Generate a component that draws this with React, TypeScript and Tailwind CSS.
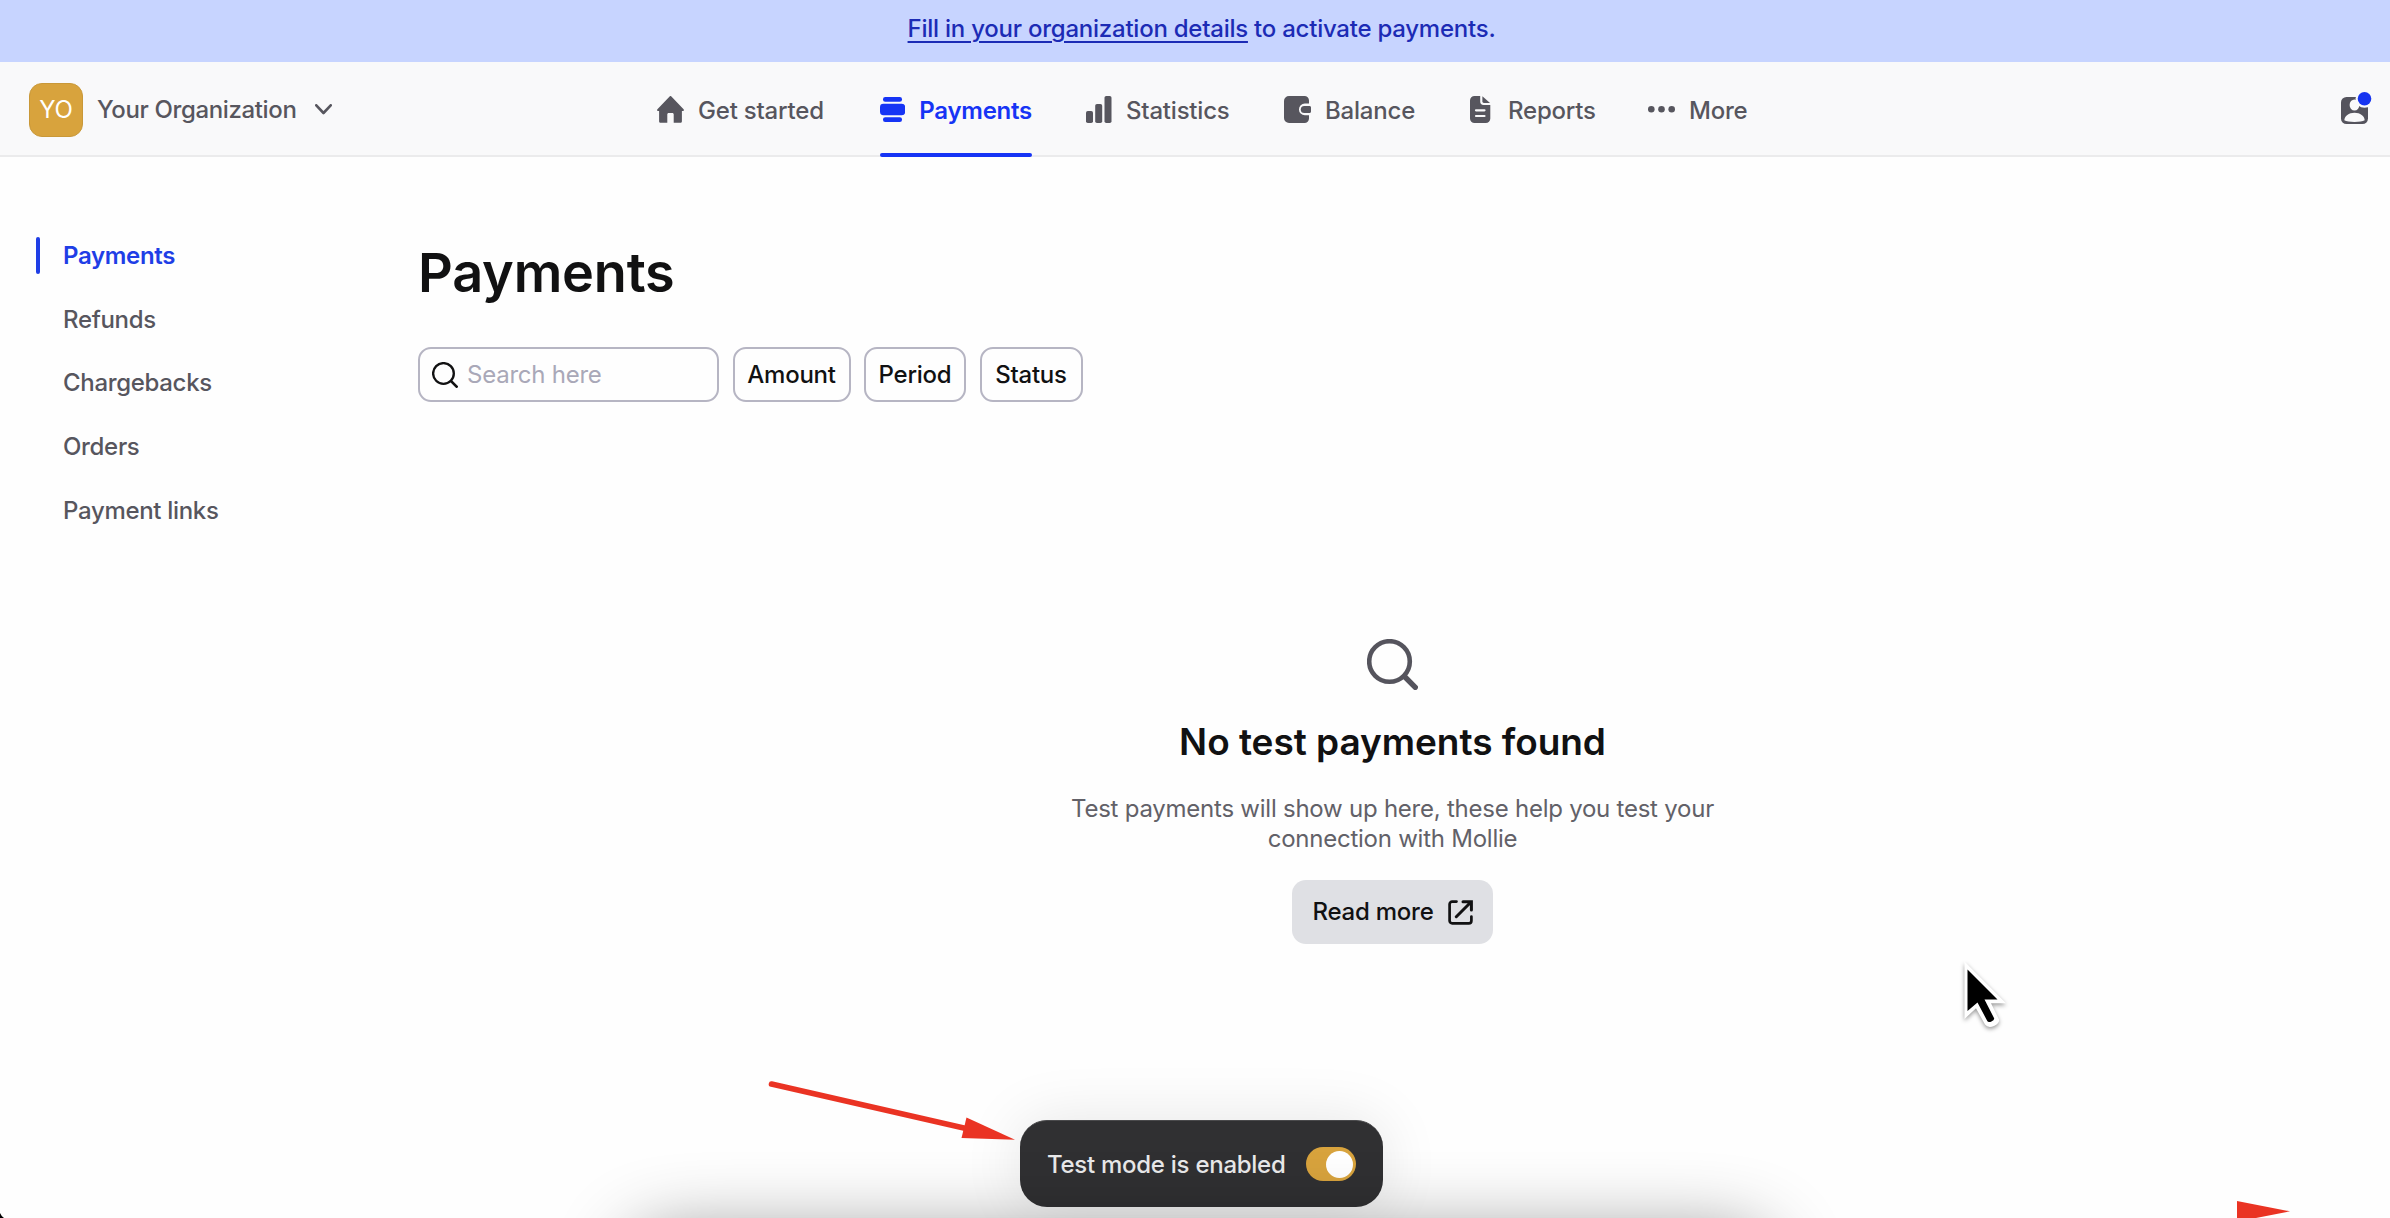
import React from "react";

type IconProps = { className?: string };

const HomeIcon = () => (
  <svg width="27" height="27" viewBox="0 0 27 27" fill="currentColor">
    <path d="M12.6.4a1.3 1.3 0 0 1 1.8 0L26.6 13.2c.7.8.2 1.8-.8 1.8h-.9v10.2c0 .9-.7 1.6-1.6 1.6h-6.6v-8.3c0-.8-.6-1.4-1.4-1.4h-3.6c-.8 0-1.4.6-1.4 1.4v8.3H3.7c-.9 0-1.6-.7-1.6-1.6V15h-.9c-1 0-1.500-1-.8-1.800z" />
  </svg>
);

const PaymentsIcon = () => (
  <svg width="27" height="27" viewBox="0 0 27 27" fill="currentColor">
    <rect x="3.200" y="0" width="20.400" height="5.200" rx="2.400" />
    <rect x="0" y="7.400" width="27" height="12.200" rx="3.600" />
    <rect x="3.200" y="21.800" width="20.400" height="5.200" rx="2.400" />
  </svg>
);

const StatisticsIcon = () => (
  <svg width="27" height="27" viewBox="0 0 27 27" fill="currentColor">
    <rect x="1" y="15" width="7" height="12" rx="1.800" />
    <rect x="10.200" y="8" width="7" height="19" rx="1.800" />
    <rect x="19.500" y="0" width="7" height="27" rx="1.800" />
  </svg>
);

const BalanceIcon = () => (
  <svg width="27" height="27" viewBox="0 0 27 27" fill="currentColor">
    <path d="M5 0h15.500A4.500 4.500 0 0 1 25 4.500V7.600h-4.200a5.850 5.850 0 0 0 0 11.700H25v3.200a4.500 4.500 0 0 1-4.500 4.500H5a5 5 0 0 1-5-5V5a5 5 0 0 1 5-5Z" />
    <path d="M20.300 9.900H25.500c.9 0 1.500.6 1.500 1.500v4.100c0 .9-.6 1.500-1.500 1.500h-5.200a3.550 3.550 0 0 1 0-7.100Z" />
  </svg>
);

const ReportsIcon = () => (
  <svg width="27" height="27" viewBox="0 0 27 27" fill="currentColor">
    <path
      fillRule="evenodd"
      d="M7.500 0H13.200V5.600A3.400 3.400 0 0 0 16.600 9H23.300V22.500a4.500 4.500 0 0 1-4.500 4.500H7.500A4.500 4.500 0 0 1 3 22.500v-18A4.500 4.500 0 0 1 7.500 0ZM9 13.200a1 1 0 0 0 0 2.200h8.500a1 1 0 0 0 0-2.200ZM9 18.900a1 1 0 0 0 0 2.200h8.500a1 1 0 0 0 0-2.200Z"
    />
    <path d="M15.400.3 23 7H16.800a1.400 1.400 0 0 1-1.400-1.400Z" />
  </svg>
);

const MoreIcon = () => (
  <svg width="27" height="27" viewBox="0 0 27 27" fill="currentColor">
    <circle cx="3.300" cy="13.300" r="3.300" />
    <circle cx="13.500" cy="13.300" r="3.300" />
    <circle cx="23.700" cy="13.300" r="3.300" />
  </svg>
);

const SearchIcon = ({ className }: IconProps) => (
  <svg className={className} viewBox="0 0 51 51" fill="none" stroke="currentColor" strokeLinecap="round">
    <circle cx="22.500" cy="22.500" r="20.300" strokeWidth="4.600" />
    <path d="M37.500 37.500 48.300 48.300" strokeWidth="5.400" />
  </svg>
);

const ProfileIcon = () => (
  <svg width="31" height="33" viewBox="0 0 31 33">
    <rect x="0" y="5" width="27" height="27" rx="5.500" fill="#55545d" />
    <ellipse cx="13.500" cy="13" rx="4.900" ry="5.600" fill="#f9f9fa" />
    <path d="M3.300 28.200c.3-4.300 4.400-7.500 10.200-7.500s9.900 3.200 10.200 7.500c-2 1.300-5.600 1.700-10.200 1.700S5.300 29.500 3.300 28.200Z" fill="#f9f9fa" />
    <circle cx="23.500" cy="6.800" r="9" fill="#f9f9fa" />
    <circle cx="23.500" cy="6.800" r="6.800" fill="#1634f0" />
  </svg>
);

const ExternalIcon = () => (
  <svg width="25" height="25" viewBox="0 0 25 25" fill="none" stroke="currentColor" strokeWidth="2.700" strokeLinecap="round">
    <path d="M8.500 1.600H4.200A2.600 2.600 0 0 0 1.600 4.200v16.600a2.600 2.600 0 0 0 2.600 2.600h16.600a2.600 2.600 0 0 0 2.600-2.600V16.500" />
    <path d="M15 1.700h8.400V10M23 2 8.300 16.700" strokeWidth="3" />
  </svg>
);

const navItems = [
  { label: "Get started", icon: <HomeIcon />, width: "w-[223px]" },
  { label: "Payments", icon: <PaymentsIcon />, width: "w-[205px]", active: true },
  { label: "Statistics", icon: <StatisticsIcon />, width: "w-[199px]" },
  { label: "Balance", icon: <BalanceIcon />, width: "w-[183px]" },
  { label: "Reports", icon: <ReportsIcon />, width: "w-[181px]" },
  { label: "More", icon: <MoreIcon />, width: "w-[100px]" },
];

const sideItems = ["Payments", "Refunds", "Chargebacks", "Orders", "Payment links"];

const filters = [
  { label: "Amount", width: "w-[118px]" },
  { label: "Period", width: "w-[102px]" },
  { label: "Status", width: "w-[103px]" },
];

export default function App() {
  return (
    <div className="relative flex h-[1218px] w-[2390px] flex-col overflow-hidden bg-[#fefefe] font-['Inter',sans-serif] text-[24px] leading-[30px] tracking-[-0.24px] text-[#57565e]">
      <div className="flex h-[62px] shrink-0 items-center justify-center bg-[#c7d4ff] pb-[5px] pl-[13px] font-medium text-[#1c2bb5]">
        <p>
          <a className="underline decoration-[1.5px] underline-offset-[4px]">Fill in your organization details</a> to activate payments.
        </p>
      </div>

      <header className="flex h-[95px] shrink-0 items-center border-b-2 border-[#ebebec] bg-[#f9f9fa]">
        <div className="flex w-[657px] shrink-0 items-center pt-[2px] pl-[29px]">
          <div className="flex size-[54px] items-center justify-center rounded-[13px] border border-[#c99838] bg-[#d8a33d] text-white">YO</div>
          <span className="ml-[14px] w-[218px] pt-[1px] font-medium tracking-[-0.36px]">Your Organization</span>
          <svg width="17" height="11" viewBox="0 0 17 11" fill="none" stroke="currentColor" strokeWidth="2.600" strokeLinecap="round" strokeLinejoin="round">
            <path d="m1.300 1.300 7.200 7.700 7.200-7.700" />
          </svg>
        </div>
        <nav className="flex h-full">
          {navItems.map((n) => (
            <div key={n.label} className={"flex " + n.width}>
              <a className={n.active ? "relative flex h-[95px] w-[152px] items-center gap-[14px] font-semibold text-[#1634f5]" : "flex h-[95px] items-center gap-[14px] font-medium tracking-[-0.2px]"}>
                {n.icon}
                <span className="pt-[2px] whitespace-nowrap">{n.label}</span>
                {n.active && <span className="absolute inset-x-0 bottom-0 h-1 rounded-full bg-[#1634f5]" />}
              </a>
            </div>
          ))}
        </nav>
        <div className="mr-[18px] ml-auto">
          <ProfileIcon />
        </div>
      </header>

      <div className="flex flex-1">
        <aside className="flex w-[418px] shrink-0 flex-col pt-[67px] tracking-[-0.32px]">
          {sideItems.map((s, i) => (
            <a key={s} className={i === 0 ? "flex h-[63.7px] items-center pl-9 font-semibold text-[#1f3ee6]" : "flex h-[63.7px] items-center pl-[63px] font-medium"}>
              {i === 0 && <span className="mr-[23px] h-[37px] w-1 rounded-full bg-[#1f3ee6]" />}
              {s}
            </a>
          ))}
        </aside>

        <main className="flex flex-1 flex-col text-[#111112]">
          <h1 className="mt-[83px] text-[54px] leading-[66px] font-semibold tracking-[-0.2px]">Payments</h1>
          <div className="mt-[41px] flex h-[55px] gap-[13.500px]">
            <div className="flex w-[301px] items-center gap-[9px] rounded-[13px] border-2 border-[#b6b5c3] pl-[12px] text-[#a9a8b8]">
              <SearchIcon className="size-[26px] text-[#111112]" />
              Search here
            </div>
            {filters.map((f) => (
              <button key={f.label} className={"flex items-center justify-center rounded-[13px] border-2 border-[#b6b5c3] font-medium " + f.width}>
                {f.label}
              </button>
            ))}
          </div>

          <section className="mt-[237px] flex w-[1949px] flex-col items-center self-start text-center">
            <SearchIcon className="size-[51px] text-[#55545d]" />
            <h2 className="mt-[28px] text-[37px] leading-[48px] font-semibold tracking-[-0.04px]">No test payments found</h2>
            <p className="mt-[28px] w-[680px] text-[#626168]">
              Test payments will show up here, these help you test your
              <br />
              connection with Mollie
            </p>
            <button className="mt-[26px] flex h-[64px] w-[201px] items-center justify-center gap-[14px] rounded-[14px] bg-[#dfe0e4] font-medium">
              Read more
              <ExternalIcon />
            </button>
          </section>
        </main>
      </div>

      {/* Floating test mode toast */}
      <div className="absolute top-[1120px] left-[1020px] flex h-[87px] w-[363px] items-center rounded-[27px] border-t border-[#4a4a4c] bg-[#303032] pl-[27px] font-medium text-[#e9e9ea] shadow-[0_0_60px_rgba(0,0,0,0.1)]">
        <span className="w-[259px] pt-[2px] tracking-[-0.27px] whitespace-nowrap">Test mode is enabled</span>
        <span className="flex h-[34px] w-[50px] items-center justify-end rounded-full bg-[#d8a33d] pr-[3px]">
          <span className="size-[27px] rounded-full bg-white" />
        </span>
      </div>

      {/* Soft shade along the bottom edge */}
      <div className="pointer-events-none absolute top-[1235px] left-[630px] h-[120px] w-[1140px] rounded-[40px] shadow-[0_0_76px_rgba(0,0,0,0.45)]" />

      {/* Annotation arrows */}
      <svg className="absolute top-[1075px] left-[765px]" width="255" height="70" viewBox="765 1075 255 70">
        <path d="M771.500 1084 966 1128.500" stroke="#ea3323" strokeWidth="5.600" strokeLinecap="round" />
        <path d="M966.500 1117.500 1015 1139.700 961.500 1138Z" fill="#ea3323" />
      </svg>
      <svg className="absolute right-[99px] bottom-0" width="54" height="18" viewBox="2237 1200 54 18">
        <path d="M2237 1201 2290 1211.300 2256 1218H2237Z" fill="#ea3323" />
      </svg>

      {/* Mouse pointer */}
      <svg className="absolute top-[955px] left-[1955px] drop-shadow-[0_2px_2px_rgba(0,0,0,0.4)]" width="60" height="80" viewBox="1955 955 60 80">
        <path d="M1964.500 961.500V1019L1976 1008.200 1985 1024.500Q1988 1028.500 1994 1026Q2001 1022 1998.500 1018.500L1991 1003.200H2006Z" fill="#fff" />
        <path d="M1967.500 969.500V1011L1977.500 1002.500 1987 1020.500Q1988 1022.800 1991 1021.700Q1995 1020 1994 1018L1984.500 999.500H1997.500Z" fill="#000" />
      </svg>

      <svg className="absolute bottom-0 left-0" width="4" height="5" viewBox="0 0 4 5">
        <path d="M0 0Q1.200 3 4 5H0Z" fill="#000" />
      </svg>
    </div>
  );
}
